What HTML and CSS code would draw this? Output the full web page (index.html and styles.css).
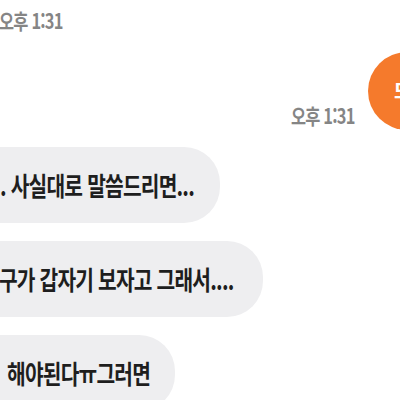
FILE: index.html
```html
<!DOCTYPE html>
<html lang="ko">
<head>
<meta charset="utf-8">
<link rel="stylesheet" href="styles.css">
</head>
<body>
<div class="chat">
  <div class="time time-top"><span class="squeeze squeeze-time">오후 1:31</span></div>
  <div class="mine">
    <span class="time time-right"><span class="squeeze squeeze-time squeeze-right">오후 1:31</span></span>
    <div class="orange"><span class="orange-text">또</span></div>
  </div>
  <div class="bubble b1"><span class="squeeze">. 사실대로 말씀드리면...</span></div>
  <div class="bubble b2"><span class="squeeze">친구가 갑자기 보자고 그래서....</span></div>
  <div class="bubble b3"><span class="squeeze">해야된다ㅠ그러면</span></div>
</div>
</body>
</html>
```
FILE: styles.css
```css
html, body {
  margin: 0;
  padding: 0;
  background: #ffffff;
  overflow: hidden;
}
body {
  width: 400px;
  height: 400px;
  font-family: "Noto Sans CJK KR", "Noto Sans", sans-serif;
}
.chat {
  display: flex;
  flex-direction: column;
  align-items: flex-start;
  padding-top: 8px;
}
.squeeze {
  display: inline-block;
  transform: scaleX(0.78);
  transform-origin: left center;
}
.squeeze-time {
  transform: scaleX(0.78);
}
.squeeze-right {
  transform-origin: right center;
}
.time {
  color: #858585;
  font-size: 21px;
  font-weight: 700;
  line-height: 24px;
  letter-spacing: -1px;
  white-space: nowrap;
}
.time-top {
  margin-left: -1px;
}
.mine {
  align-self: stretch;
  display: flex;
  justify-content: flex-end;
  align-items: flex-end;
  gap: 13px;
  margin-top: 20px;
  margin-right: -46px;
}
.time-right {
  margin-bottom: 3px;
}
.orange {
  width: 78px;
  height: 78px;
  border-radius: 50%;
  background: #f57a2c;
  display: flex;
  align-items: center;
  padding-left: 26px;
  box-sizing: border-box;
  flex-shrink: 0;
}
.orange-text {
  color: #ffffff;
  font-size: 20px;
  font-weight: 700;
  line-height: 20px;
}
.bubble {
  background: #eeeef0;
  color: #1e1e1e;
  font-size: 26px;
  font-weight: 700;
  letter-spacing: -1px;
  line-height: 76px;
  height: 76px;
  border-radius: 36px;
  margin-left: -40px;
  white-space: nowrap;
  box-sizing: border-box;
  overflow: hidden;
}
.b1 {
  margin-top: 17px;
  padding-left: 40px;
  width: 260px;
}
.b2 {
  margin-top: 18px;
  padding-left: 21px;
  width: 303px;
}
.b3 {
  margin-top: 18px;
  padding-left: 47px;
  width: 215px;
}
```
